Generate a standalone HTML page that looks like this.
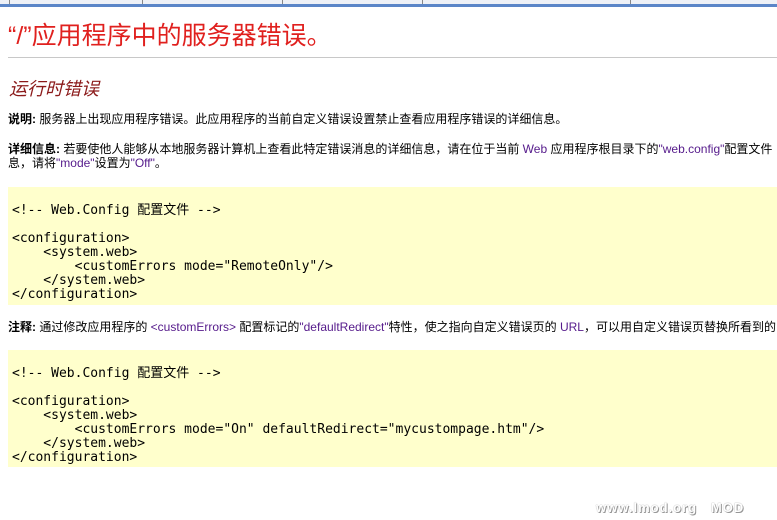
<!DOCTYPE html>
<html><head><meta charset="utf-8"><style>
body{margin:0;width:777px;height:520px;overflow:hidden;background:#fff;font-family:"Liberation Sans","Noto Sans CJK SC",sans-serif;position:relative}
.top{position:absolute;left:0;top:0;width:777px;height:4px;background:#eef1f7}
.top i{position:absolute;top:0;width:1px;height:4px;background:#888}
.bar{position:absolute;left:0;top:4px;width:777px;height:3px;background:#5b86c8}
.t{position:absolute;white-space:nowrap}
h1{position:absolute;left:8px;top:16px;margin:0;font-size:25px;font-weight:normal;color:#e0201e;white-space:nowrap}
.hr{position:absolute;left:8px;top:57px;width:769px;height:1px;background:#c8c8c8}
h2{position:absolute;left:9px;top:75px;margin:0;font-size:18px;font-weight:normal;font-style:italic;color:#8b1a1a;white-space:nowrap}
.p{font-size:12px;color:#000;line-height:14px}
.p b{font-weight:bold}
.g{color:#551a8b}
.code{position:absolute;left:8px;width:769px;background:#ffffcc;font-family:"DejaVu Sans Mono","Noto Sans CJK SC",monospace;font-size:13px;line-height:14px;white-space:pre;color:#000;padding-left:4px}
</style></head><body>
<div class="top"><i style="left:9px"></i><i style="left:142px"></i><i style="left:282px"></i><i style="left:422px"></i><i style="left:630px"></i></div>
<div class="bar"></div>
<h1>“/”应用程序中的服务器错误。</h1>
<div class="hr"></div>
<h2>运行时错误</h2>
<div class="t p" style="left:8px;top:112px"><b>说明:</b> 服务器上出现应用程序错误。此应用程序的当前自定义错误设置禁止查看应用程序错误的详细信息。</div>
<div class="t p" style="left:8px;top:142px"><b>详细信息:</b> 若要使他人能够从本地服务器计算机上查看此特定错误消息的详细信息，请在位于当前 <span class="g">Web</span> 应用程序根目录下的<span class="g">"web.config"</span>配置文件<br>息，请将<span class="g">"mode"</span>设置为<span class="g">"Off"</span>。</div>
<div class="code" style="top:187px;height:118px;padding-top:17px;box-sizing:border-box">&lt;!-- Web.Config 配置文件 --&gt;

&lt;configuration&gt;
    &lt;system.web&gt;
        &lt;customErrors mode="RemoteOnly"/&gt;
    &lt;/system.web&gt;
&lt;/configuration&gt;</div>
<div class="t p" style="left:8px;top:320px"><b>注释:</b> 通过修改应用程序的 <span class="g">&lt;customErrors&gt;</span> 配置标记的<span class="g">"defaultRedirect"</span>特性，使之指向自定义错误页的 <span class="g">URL</span>，可以用自定义错误页替换所看到的</div>
<div class="code" style="top:350px;height:117px;padding-top:17px;box-sizing:border-box">&lt;!-- Web.Config 配置文件 --&gt;

&lt;configuration&gt;
    &lt;system.web&gt;
        &lt;customErrors mode="On" defaultRedirect="mycustompage.htm"/&gt;
    &lt;/system.web&gt;
&lt;/configuration&gt;</div>
<div class="t" style="left:596px;top:500px;font-size:13px;font-weight:bold;color:#fff;text-shadow:0 0 1px #888,1px 1px 0 #999;letter-spacing:1px">www.lmod.org &nbsp; MOD</div>
</body></html>
